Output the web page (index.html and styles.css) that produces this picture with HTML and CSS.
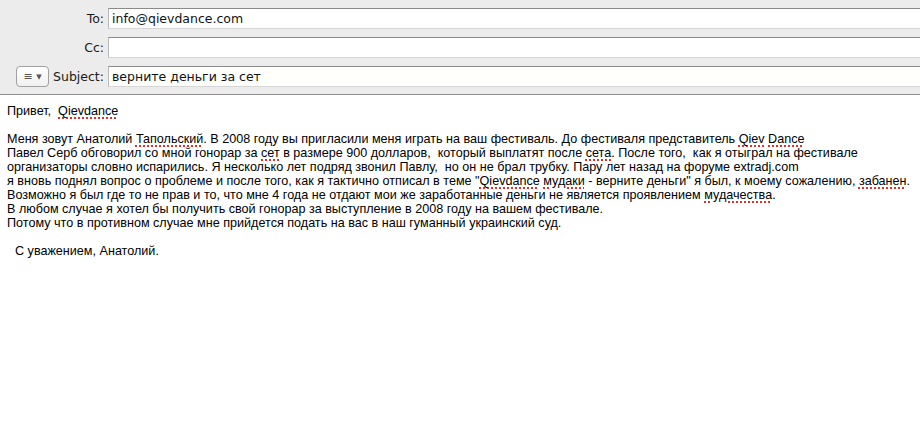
FILE: index.html
```html
<!DOCTYPE html>
<html lang="en">
<head>
    <meta charset="UTF-8">
    <title>New Message</title>
    <link rel="stylesheet" href="styles.css">
</head>
<body>

    <div class="headers">
        <div class="field-row">
            <label class="field-label">To:</label>
            <div class="field-input">info@qievdance.com</div>
        </div>
        <div class="field-row">
            <label class="field-label">Cc:</label>
            <div class="field-input"></div>
        </div>
        <div class="field-row">
            <div class="field-label subject-label">
                <button class="menu-btn">&#8801; <span class="caret">&#9660;</span></button>
                <span>Subject:</span>
            </div>
            <div class="field-input subject">верните деньги за сет</div>
        </div>
    </div>

    <div class="message">
        <p>Привет,&nbsp; <span class="typo">Qievdance</span></p>

        <p>Меня зовут Анатолий <span class="typo">Тапольский</span>. В 2008 году вы пригласили меня играть на ваш фестиваль. До фестиваля представитель <span class="typo">Qiev</span> <span class="typo">Dance</span><br>
        Павел Серб обговорил со мной гонорар за <span class="typo">сет</span> в размере 900 долларов,&nbsp; который выплатят после <span class="typo">сета</span>. После того,&nbsp; как я отыграл на фестивале<br>
        организаторы словно испарились. Я несколько лет подряд звонил Павлу,&nbsp; но он не брал трубку. Пару лет назад на форуме extradj.com<br>
        я вновь поднял вопрос о проблеме и после того, как я тактично отписал в теме "<span class="typo">Qievdance</span> <span class="typo">мудаки</span> - верните деньги" я был, к моему сожалению, <span class="typo">забанен</span>.<br>
        Возможно я был где то не прав и то, что мне 4 года не отдают мои же заработанные деньги не является проявлением <span class="typo">мудачества</span>.<br>
        В любом случае я хотел бы получить свой гонорар за выступление в 2008 году на вашем фестивале.<br>
        Потому что в противном случае мне прийдется подать на вас в наш гуманный украинский суд.</p>

        <p class="signoff">С уважением, Анатолий.</p>
    </div>

</body>
</html>
```

FILE: styles.css
```css
/* General Styling */
body {
    margin: 0;
    background-color: #ffffff;
    font-family: "Liberation Sans", Arial, sans-serif;
    color: #000;
}

/* Header fields */
.headers {
    background-color: #ececec;
    border-bottom: 1px solid #8e8e8e;
    padding: 7px 0 7px 0;
    display: flex;
    flex-direction: column;
    gap: 7px;
}

.field-row {
    display: flex;
    align-items: center;
    height: 22px;
}

.field-label {
    width: 104px;
    padding-right: 4px;
    text-align: right;
    font-family: "DejaVu Sans", sans-serif;
    font-size: 12.5px;
    color: #1a1a1a;
}

.subject-label {
    display: flex;
    align-items: center;
    justify-content: flex-end;
    gap: 4px;
}

.menu-btn {
    width: 34px;
    height: 21px;
    margin-right: auto;
    margin-left: 16px;
    padding: 0;
    border: 1px solid #a0a0a0;
    border-radius: 4px;
    background: linear-gradient(#ffffff, #f0f0f0);
    font-family: "DejaVu Sans", sans-serif;
    font-size: 11px;
    color: #555;
    line-height: 19px;
}

.caret {
    font-size: 7px;
    vertical-align: 1px;
}

.field-input {
    flex: 1;
    height: 21px;
    box-sizing: border-box;
    background-color: #fff;
    border-top: 1px solid #8a8a8a;
    border-left: 1px solid #b8b8b8;
    border-bottom: 1px solid #d6d6d6;
    padding: 2px 0 0 3px;
    font-family: "DejaVu Sans", sans-serif;
    font-size: 12.5px;
    color: #111;
    white-space: nowrap;
}

.subject {
    background-color: #fffffb;
}

/* Message body */
.message {
    padding: 9px 7px 2px 7px;
    font-size: 12.6px;
    line-height: 14px;
}

.message p {
    margin: 0 0 14px 0;
    white-space: nowrap;
}

.signoff {
    padding-left: 8px;
}

.typo {
    text-decoration: underline dotted #e0302a;
    text-decoration-thickness: 2px;
    text-underline-offset: 2px;
}
```
